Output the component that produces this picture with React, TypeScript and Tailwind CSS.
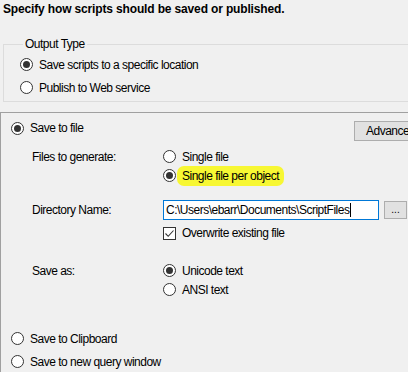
function Radio({ checked }: { checked?: boolean }) {
  return (
    <span className="w-[13px] h-[13px] rounded-full border border-[#333333] bg-white flex items-center justify-center shrink-0">
      {checked && <span className="w-[7px] h-[7px] rounded-full bg-[#333333]" />}
    </span>
  );
}

function Option({ checked, label, h = "h-[19px]" }: { checked?: boolean; label: string; h?: string }) {
  return (
    <div className={`flex items-center gap-[6px] ${h}`}>
      <Radio checked={checked} />
      <span>{label}</span>
    </div>
  );
}

export default function App() {
  return (
    <div className="w-[408px] h-[372px] overflow-hidden bg-[#f0f0f0] text-black text-[12px] leading-[14px] tracking-[-0.5px] whitespace-nowrap flex flex-col font-['Liberation_Sans',Arial,sans-serif]">
      <div className="pt-[2px] pl-[3px] font-bold tracking-[-0.15px]">Specify how scripts should be saved or published.</div>

      {/* Output type group */}
      <fieldset className="mt-[21px] ml-[3px] w-[430px] shrink-0 border border-[#dcdcdc] pl-[16px] pt-[2px] pb-[2px]">
        <legend className="ml-[3px] px-[2px]">Output Type</legend>
        <Option checked label="Save scripts to a specific location" h="h-[23px]" />
        <Option label="Publish to Web service" h="h-[23px]" />
      </fieldset>

      {/* Destination panel */}
      <div className="mt-[10px] w-[430px] flex-1 border-t border-l border-[#a0a0a0] pl-[10px] flex flex-col">
        <div className="flex items-start pt-[5px]">
          <div className="w-[343px] shrink-0 flex items-center gap-[6px] h-[20px]">
            <Radio checked />
            <span>Save to file</span>
          </div>
          <button className="mt-[3px] h-[20px] w-[70px] shrink-0 bg-[#e1e1e1] border border-[#adadad] text-left pl-[11px]">
            Advanced
          </button>
        </div>

        <div className="mt-[6px] flex">
          <div className="w-[152px] shrink-0 pl-[21px] h-[19px] flex items-center">Files to generate:</div>
          <div className="flex flex-col">
            <Option label="Single file" />
            <div className="flex items-center gap-[1px] h-[19px]">
              <Radio checked />
              <span className="bg-[#f7f733] rounded-[7px] px-[5px] py-[3px] leading-[14px]">Single file per object</span>
            </div>
          </div>
        </div>

        <div className="mt-[15px] flex items-center h-[20px]">
          <div className="w-[152px] shrink-0 pl-[21px]">Directory Name:</div>
          <div className="w-[216px] shrink-0 h-[20px] border border-[#0078d7] bg-white pl-[2px] flex items-center">
            <span>{"C:\\Users\\ebarr\\Documents\\ScriptFiles"}</span>
            <span className="w-px h-[14px] bg-black ml-[1px]" />
          </div>
          <button className="ml-[5px] w-[23px] shrink-0 h-[18px] bg-[#e1e1e1] border border-[#adadad] text-[10px] leading-[10px] flex items-end justify-center pb-[3px] tracking-normal">
            ...
          </button>
        </div>

        <div className="mt-[3px] flex items-center h-[20px] pl-[152px] gap-[6px]">
          <span className="w-[13px] h-[13px] border border-[#333333] bg-white flex items-center justify-center">
            <svg width="11" height="11" viewBox="0 0 11 11" fill="none">
              <path d="M1.5 5.5 L4.2 8.3 L9.5 2.5" stroke="#333333" strokeWidth="1.1" />
            </svg>
          </span>
          <span>Overwrite existing file</span>
        </div>

        <div className="mt-[18px] flex">
          <div className="w-[152px] shrink-0 pl-[21px] h-[19px] flex items-center">Save as:</div>
          <div className="flex flex-col">
            <Option checked label="Unicode text" />
            <Option label="ANSI text" />
          </div>
        </div>

        <div className="mt-[28px] flex flex-col">
          <Option label="Save to Clipboard" h="h-[23px]" />
          <Option label="Save to new query window" h="h-[23px]" />
        </div>
      </div>
    </div>
  );
}
